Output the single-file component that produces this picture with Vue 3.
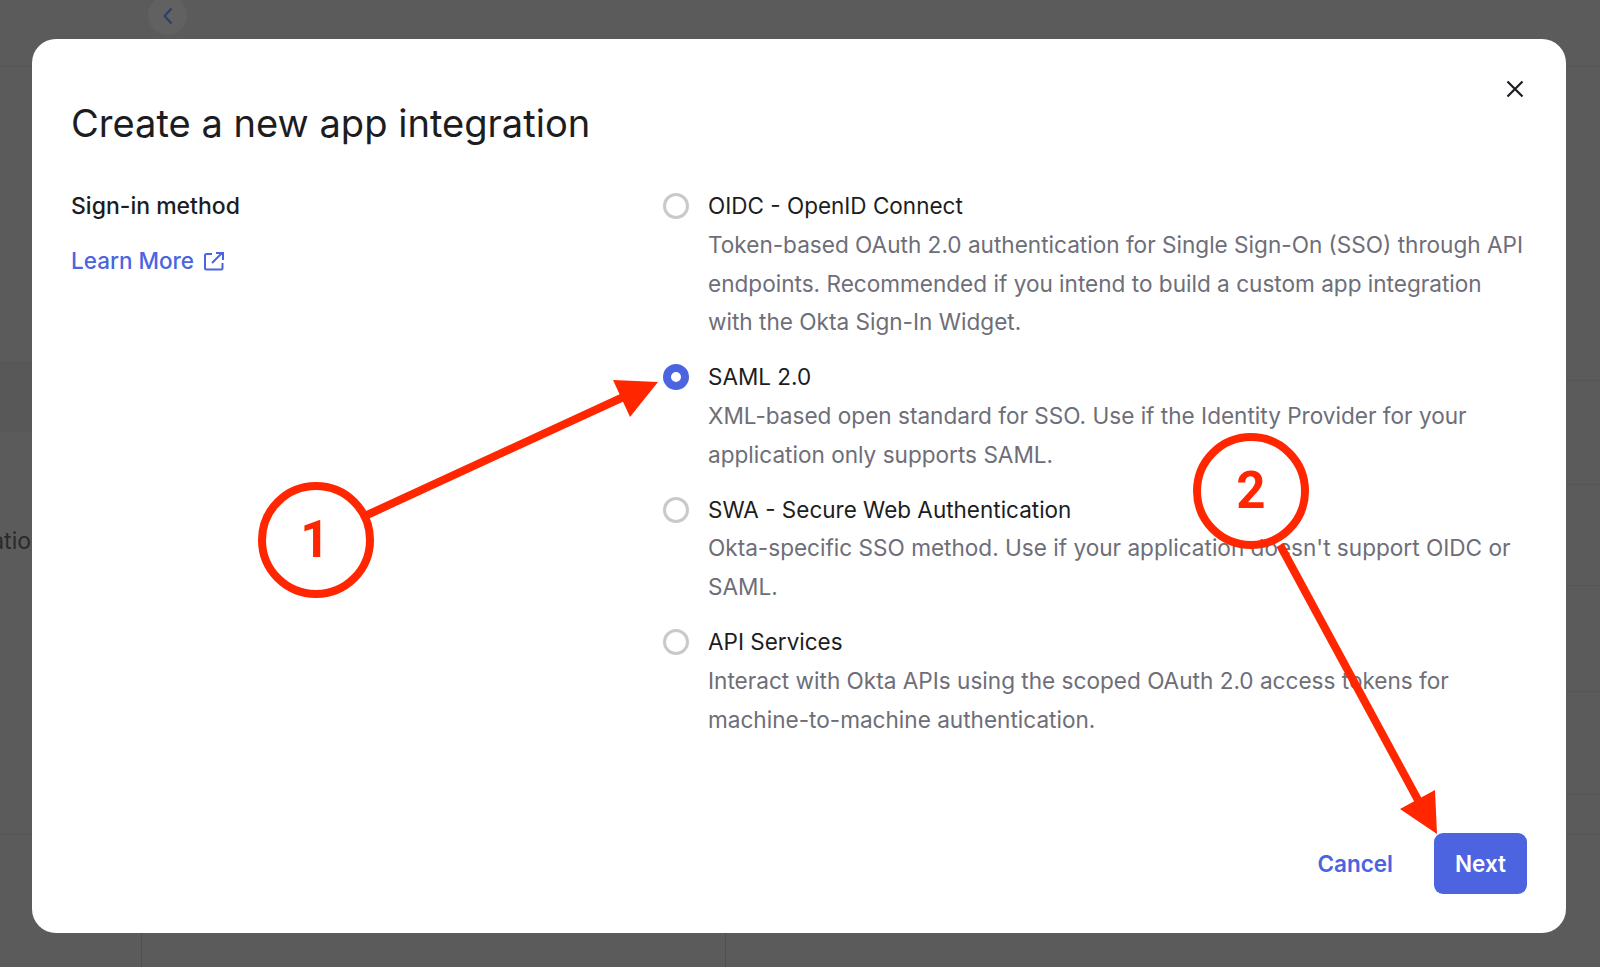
<template>
  <div class="page">
    <!-- dimmed page behind the dialog -->
    <div class="behind">
      <div class="back-btn">
        <svg width="12" height="18" viewBox="0 0 12 18"><path d="M9.5 1.5 2.5 9l7 7.5" fill="none" stroke="#2f3a6e" stroke-width="2" /></svg>
      </div>
      <div class="band"></div>
      <div class="hline" style="top: 66px"></div>
      <div class="hline" style="top: 834px"></div>
      <div class="hline right" style="top: 380px"></div>
      <div class="hline right" style="top: 484px"></div>
      <div class="hline right" style="top: 585px"></div>
      <div class="hline right" style="top: 691px"></div>
      <div class="hline right" style="top: 794px"></div>
      <div class="vline" style="left: 141px"></div>
      <div class="vline" style="left: 725px"></div>
      <div class="peek">Integratio</div>
    </div>

    <div class="modal">
      <button class="close" aria-label="Close">
        <svg width="18" height="18" viewBox="0 0 18 18"><path d="M1.500 1.500l15 15M16.500 1.500l-15 15" fill="none" stroke="#1d1d21" stroke-width="2.2" /></svg>
      </button>
      <h1 class="title">Create a new app integration</h1>
      <div class="body">
        <div class="side">
          <div class="side-label">Sign-in method</div>
          <a class="learn">
            Learn More
            <svg width="22" height="20" viewBox="0 0 22 20">
              <path d="M9 3H3.500A1.500 1.500 0 0 0 2 4.500V17a1.500 1.500 0 0 0 1.500 1.500H18a1.500 1.500 0 0 0 1.500-1.500v-5" fill="none" stroke="#4c64e0" stroke-width="2" />
              <path d="M9 12l10-10M13 2h7v7" fill="none" stroke="#4c64e0" stroke-width="2" />
            </svg>
          </a>
        </div>
        <div class="options">
          <div v-for="opt in options" :key="opt.name" class="option">
            <span class="radio" :class="{ checked: opt.checked }"></span>
            <div class="option-text">
              <div class="option-name">{{ opt.name }}</div>
              <div class="option-desc">
                <div v-for="line in opt.lines" :key="line">{{ line }}</div>
              </div>
            </div>
          </div>
        </div>
      </div>
      <div class="footer">
        <a class="cancel">Cancel</a>
        <button class="next">Next</button>
      </div>
    </div>

    <!-- annotation layer drawn over the screenshot -->
    <svg class="marks" width="1600" height="967" viewBox="0 0 1600 967">
      <circle cx="316" cy="540" r="54" fill="none" stroke="#ff2600" stroke-width="8" />
      <line x1="367" y1="515" x2="630" y2="394" stroke="#ff2600" stroke-width="8" />
      <polygon points="658,382 613,380 630,417" fill="#ff2600" />
      <text x="315" y="557" class="num">1</text>
      <circle cx="1251" cy="491" r="54" fill="none" stroke="#ff2600" stroke-width="8" />
      <line x1="1280" y1="545" x2="1418" y2="800" stroke="#ff2600" stroke-width="8" />
      <polygon points="1437,834 1435,790 1400,809" fill="#ff2600" />
      <text x="1251" y="508" class="num">2</text>
    </svg>
  </div>
</template>

<script setup>
const options = [
  {
    name: "OIDC - OpenID Connect",
    lines: [
      "Token-based OAuth 2.0 authentication for Single Sign-On (SSO) through API",
      "endpoints. Recommended if you intend to build a custom app integration",
      "with the Okta Sign-In Widget.",
    ],
  },
  {
    name: "SAML 2.0",
    checked: true,
    lines: [
      "XML-based open standard for SSO. Use if the Identity Provider for your",
      "application only supports SAML.",
    ],
  },
  {
    name: "SWA - Secure Web Authentication",
    lines: [
      "Okta-specific SSO method. Use if your application doesn't support OIDC or",
      "SAML.",
    ],
  },
  {
    name: "API Services",
    lines: [
      "Interact with Okta APIs using the scoped OAuth 2.0 access tokens for",
      "machine-to-machine authentication.",
    ],
  },
];
</script>

<style>
html,
body {
  margin: 0;
  background: #5c5c5c;
}
</style>

<style scoped>
.page {
  position: relative;
  width: 1600px;
  height: 967px;
  box-sizing: border-box;
  padding: 39px 34px 34px 32px;
  overflow: hidden;
  background: #5b5b5b;
  font-family: Inter, "Liberation Sans", sans-serif;
}
.behind {
  position: absolute;
  inset: 0;
}
.back-btn {
  position: absolute;
  left: 148px;
  top: -4px;
  width: 39px;
  height: 39px;
  border-radius: 50%;
  background: #616161;
  display: flex;
  align-items: center;
  justify-content: center;
}
.band {
  position: absolute;
  left: 0;
  top: 361px;
  width: 32px;
  height: 71px;
  background: #585858;
}
.hline {
  position: absolute;
  left: 0;
  right: 0;
  height: 1px;
  background: #565656;
}
.hline.right {
  left: 1566px;
}
.vline {
  position: absolute;
  top: 933px;
  bottom: 0;
  width: 1px;
  background: #505050;
}
.peek {
  position: absolute;
  right: 1569px;
  top: 526px;
  font-size: 23px;
  line-height: 30px;
  color: #2a2a2a;
  white-space: nowrap;
}
.modal {
  position: relative;
  height: 894px;
  box-sizing: border-box;
  padding: 61px 39px 39px 39px;
  background: #fff;
  border-radius: 24px;
  display: flex;
  flex-direction: column;
}
.close {
  position: absolute;
  top: 41px;
  right: 42px;
  width: 18px;
  height: 18px;
  padding: 0;
  border: 0;
  background: none;
  display: flex;
}
.title {
  margin: 0;
  font-size: 38.1px;
  line-height: 46px;
  font-weight: 400;
  color: #1d1d21;
}
.body {
  display: flex;
  margin-top: 40px;
  flex: 1;
}
.side {
  width: 592px;
  flex: none;
  padding-top: 1px;
}
.side-label {
  font-size: 23px;
  line-height: 38px;
  font-weight: 500;
  color: #1d1d21;
}
.learn {
  margin-top: 17px;
  display: flex;
  align-items: center;
  gap: 9px;
  font-size: 22.5px;
  line-height: 38px;
  font-weight: 500;
  color: #4c64e0;
}
.options {
  display: flex;
  flex-direction: column;
  gap: 16px;
  padding-top: 1px;
}
.option {
  display: flex;
  gap: 19px;
}
.radio {
  width: 26px;
  height: 26px;
  flex: none;
  margin-top: 6px;
  box-sizing: border-box;
  border: 3px solid #c9c9c9;
  border-radius: 50%;
  background: #fff;
}
.radio.checked {
  border: 8px solid #4c64e0;
}
.option-text {
  font-size: 22.5px;
  line-height: 38.8px;
  white-space: nowrap;
}
.option-name {
  color: #1d1d21;
}
.option-desc {
  font-size: 22.58px;
  color: #6e6e78;
}
.footer {
  display: flex;
  justify-content: flex-end;
  align-items: center;
  gap: 41px;
}
.cancel {
  font-size: 22.5px;
  font-weight: 600;
  color: #4c64e0;
}
.next {
  width: 93px;
  height: 61px;
  border: 0;
  border-radius: 9px;
  background: #4c64e0;
  color: #fff;
  font-family: inherit;
  font-size: 22.5px;
  font-weight: 600;
}
.marks {
  position: absolute;
  left: 0;
  top: 0;
  pointer-events: none;
}
.num {
  font-family: Roboto, "Liberation Sans", sans-serif;
  font-size: 51px;
  font-weight: 700;
  fill: #ff2600;
  text-anchor: middle;
}
</style>
